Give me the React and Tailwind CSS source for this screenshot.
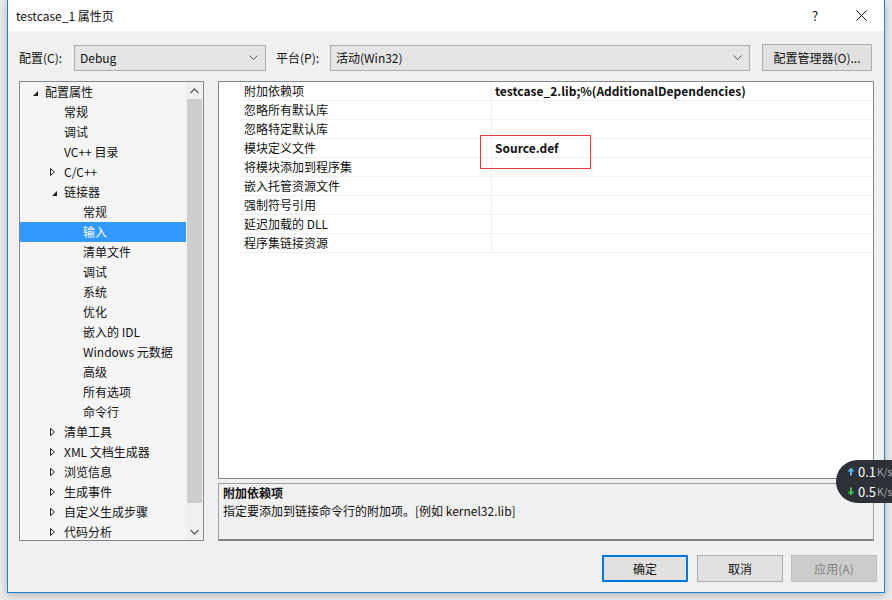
const treeItems = [
  { t: '配置属性', lvl: 0, arrow: 'open' },
  { t: '常规', lvl: 1 },
  { t: '调试', lvl: 1 },
  { t: 'VC++ 目录', lvl: 1 },
  { t: 'C/C++', lvl: 1, arrow: 'closed' },
  { t: '链接器', lvl: 1, arrow: 'open' },
  { t: '常规', lvl: 2 },
  { t: '输入', lvl: 2, sel: true },
  { t: '清单文件', lvl: 2 },
  { t: '调试', lvl: 2 },
  { t: '系统', lvl: 2 },
  { t: '优化', lvl: 2 },
  { t: '嵌入的 IDL', lvl: 2 },
  { t: 'Windows 元数据', lvl: 2 },
  { t: '高级', lvl: 2 },
  { t: '所有选项', lvl: 2 },
  { t: '命令行', lvl: 2 },
  { t: '清单工具', lvl: 1, arrow: 'closed' },
  { t: 'XML 文档生成器', lvl: 1, arrow: 'closed' },
  { t: '浏览信息', lvl: 1, arrow: 'closed' },
  { t: '生成事件', lvl: 1, arrow: 'closed' },
  { t: '自定义生成步骤', lvl: 1, arrow: 'closed' },
  { t: '代码分析', lvl: 1, arrow: 'closed' },
];

const props = [
  { name: '附加依赖项', value: 'testcase_2.lib;%(AdditionalDependencies)' },
  { name: '忽略所有默认库' },
  { name: '忽略特定默认库' },
  { name: '模块定义文件', value: 'Source.def' },
  { name: '将模块添加到程序集' },
  { name: '嵌入托管资源文件' },
  { name: '强制符号引用' },
  { name: '延迟加载的 DLL' },
  { name: '程序集链接资源' },
];

const indent = { 0: 'pl-[11px]', 1: 'pl-[30px]', 2: 'pl-[49px]' };

const Arrow = ({ kind }) => {
  if (kind === 'open') {
    return (
      <svg width="14" height="20" viewBox="0 0 14 20">
        <path d="M7 9 L7 14 L2 14 Z" fill="#1e1e1e" />
      </svg>
    );
  }
  if (kind === 'closed') {
    return (
      <svg width="14" height="20" viewBox="0 0 14 20">
        <path d="M0.5 6.5 L0.5 13.5 L4.5 10 Z" fill="none" stroke="#1e1e1e" strokeWidth="1" />
      </svg>
    );
  }
  return <span className="w-[14px]" />;
};

const Chevron = () => (
  <svg width="9" height="6" viewBox="0 0 9 6">
    <path d="M0.5 0.5 L4.5 4.5 L8.5 0.5" fill="none" stroke="#555" strokeWidth="1" />
  </svg>
);

const Dropdown = ({ w, text }) => (
  <div className={`${w} h-[26px] border border-[#acacac] bg-[#e5e5e5] flex items-center pl-[5px] pr-[7px]`}>
    <span className="flex-1">{text}</span>
    <Chevron />
  </div>
);

const App = () => {
  return (
    <div className="w-[892px] h-[600px] bg-[#ebebeb] relative overflow-hidden font-['Noto_Sans_CJK_SC',sans-serif] text-[12px] text-[#111]">
      {/* Dialog */}
      <div className="ml-[7px] w-[878px] h-[593px] border-x border-b border-[#1883d7] bg-[#f0f0f0] flex flex-col shadow-[0_2px_8px_rgba(0,0,0,0.25)]">
        {/* Title bar */}
        <div className="h-[31px] bg-white flex items-center pl-[8px]">
          <span className="leading-[16px]">testcase_1 属性页</span>
          <div className="ml-auto flex h-full">
            <div className="w-[46px] flex items-center justify-center text-[13px]">?</div>
            <div className="w-[46px] flex items-center justify-center">
              <svg width="11" height="11" viewBox="0 0 11 11">
                <path d="M0.5 0.5 L10.5 10.5 M10.5 0.5 L0.5 10.5" stroke="#111" strokeWidth="1" />
              </svg>
            </div>
          </div>
        </div>

        {/* Config row */}
        <div className="mt-[13px] h-[27px] flex items-center pl-[11px]">
          <span className="w-[55px]">配置(C):</span>
          <Dropdown w="w-[192px]" text="Debug" />
          <span className="w-[54px] ml-[10px]">平台(P):</span>
          <Dropdown w="w-[420px]" text="活动(Win32)" />
          <div className="ml-[12px] w-[110px] h-[27px] border border-[#adadad] bg-[#e1e1e1] flex items-center justify-center">
            配置管理器(O)...
          </div>
        </div>

        {/* Main area */}
        <div className="mt-[10px] h-[460px] flex pl-[11px]">
          {/* Tree */}
          <div className="w-[185px] h-full border border-[#828790] bg-[#f5f5f5] flex">
            <div className="flex-1 overflow-hidden">
              {treeItems.map((it, i) => (
                <div
                  key={i}
                  className={`h-[20px] flex items-center leading-[20px] whitespace-nowrap ${indent[it.lvl]} ${
                    it.sel ? 'bg-[#3399ff] text-white' : ''
                  }`}
                >
                  <Arrow kind={it.arrow} />
                  <span>{it.t}</span>
                </div>
              ))}
            </div>
            <div className="w-[17px] bg-[#f0f0f0] flex flex-col">
              <div className="h-[17px] flex items-center justify-center">
                <svg width="9" height="6" viewBox="0 0 9 6">
                  <path d="M0.5 5 L4.5 1 L8.5 5" fill="none" stroke="#606060" strokeWidth="1.3" />
                </svg>
              </div>
              <div className="h-[404px] ml-[1px] w-[15px] bg-[#cdcdcd]" />
              <div className="flex-1" />
              <div className="h-[17px] flex items-center justify-center">
                <svg width="9" height="6" viewBox="0 0 9 6">
                  <path d="M0.5 1 L4.5 5 L8.5 1" fill="none" stroke="#606060" strokeWidth="1.3" />
                </svg>
              </div>
            </div>
          </div>

          {/* Right column */}
          <div className="ml-[14px] w-[656px] h-full flex flex-col">
            {/* Property grid */}
            <div className="h-[398px] border border-[#828790] bg-white relative">
              {props.map((p, i) => (
                <div key={i} className="h-[19px] flex">
                  <div className="w-[21px]" />
                  <div className="w-[252px] border-b border-r border-[#f0f0f0] pl-[4px] leading-[18px]">{p.name}</div>
                  <div className="flex-1 border-b border-[#f0f0f0] pl-[3px] leading-[18px] font-bold">{p.value}</div>
                </div>
              ))}
              <div className="absolute left-[261px] top-[53px] w-[111px] h-[34px] border border-[#e8393a]" />
            </div>

            {/* Description */}
            <div className="mt-[4px] h-[58px] border border-[#a0a0a0] border-b-2 border-b-[#828282] bg-[#f0f0f0] pl-[4px]">
              <div className="leading-[18px] font-bold">附加依赖项</div>
              <div className="leading-[18px]">指定要添加到链接命令行的附加项。[例如 kernel32.lib]</div>
            </div>
          </div>
        </div>

        {/* Buttons */}
        <div className="mt-[14px] h-[27px] flex justify-end pr-[7px]">
          <div className="w-[86px] h-full border-2 border-[#0078d7] bg-[#e1e1e1] flex items-center justify-center">确定</div>
          <div className="ml-[9px] w-[86px] h-full border border-[#adadad] bg-[#e1e1e1] flex items-center justify-center">取消</div>
          <div className="ml-[8px] w-[86px] h-full border border-[#bfbfbf] bg-[#cccccc] text-[#838383] flex items-center justify-center">应用(A)</div>
        </div>
      </div>

      {/* Network speed widget */}
      <div className="absolute left-[836px] top-[460px] w-[70px] h-[43px] rounded-l-[22px] bg-[#2e3238] flex flex-col justify-center pl-[11px] text-white">
        <div className="flex items-center h-[20px]">
          <svg width="8" height="9" viewBox="0 0 8 9">
            <path d="M4 0.5 L7.5 4.5 L5 4.5 L5 8.5 L3 8.5 L3 4.5 L0.5 4.5 Z" fill="#5cb8f0" />
          </svg>
          <span className="ml-[3px] text-[13px] leading-[20px]">0.1</span>
          <span className="ml-[1px] text-[10px] text-[#a9adb2] leading-[20px]">K/s</span>
        </div>
        <div className="flex items-center h-[20px]">
          <svg width="8" height="9" viewBox="0 0 8 9">
            <path d="M4 8.5 L7.5 4.5 L5 4.5 L5 0.5 L3 0.5 L3 4.5 L0.5 4.5 Z" fill="#3fc24a" />
          </svg>
          <span className="ml-[3px] text-[13px] leading-[20px]">0.5</span>
          <span className="ml-[1px] text-[10px] text-[#a9adb2] leading-[20px]">K/s</span>
        </div>
      </div>
    </div>
  );
};

export default App;
